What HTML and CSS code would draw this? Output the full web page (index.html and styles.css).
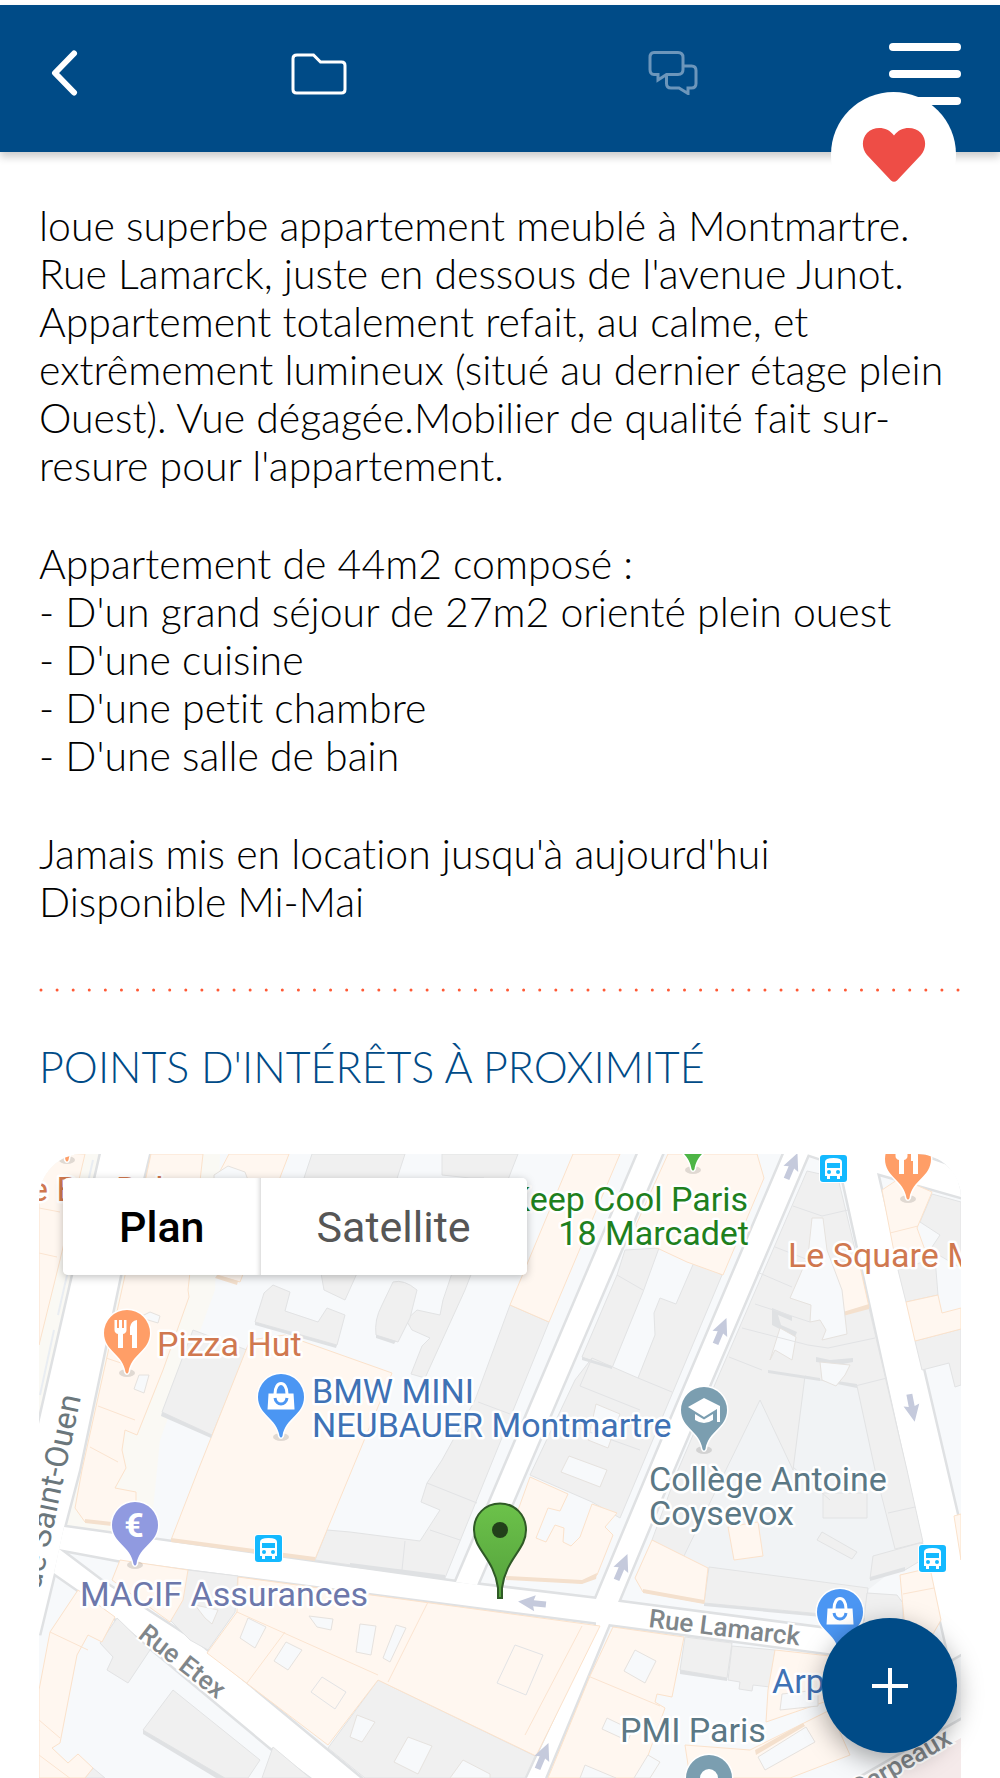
FILE: index.html
```html
<!DOCTYPE html>
<html lang="fr">
<head>
  <meta charset="UTF-8">
  <meta name="viewport" content="width=device-width, initial-scale=1.0">
  <title>Appartement meublé à Montmartre</title>
  <link rel="stylesheet" href="styles.css">
</head>
<body>
  <header class="topbar">
    <a class="back" href="#" aria-label="Retour">
      <svg width="28" height="48" viewBox="0 0 28 48"><path d="M23 4.500L4 24l19 19.500"/></svg>
    </a>
    <a class="tab" href="#" aria-label="Dossier">
      <svg width="56" height="42" viewBox="0 0 56 42"><path d="M6 2H22.500L29.500 9H50.500Q54 9 54 12.500V36.500Q54 40 50.500 40H5.500Q2 40 2 36.500V5.500Q2 2 6 2Z"/></svg>
    </a>
    <a class="tab tab-off" href="#" aria-label="Messages">
      <svg width="50" height="44" viewBox="0 0 50 44"><path d="M6 1.500H30Q35 1.500 35 6.500V18.500Q35 23.500 30 23.500H18.500L10 29V23.500H6Q2 23.500 2 18.500V6.500Q2 1.500 6 1.500ZM35 15H43.500Q48 15 48 19.500V32.500Q48 37 43.500 37H40V42.500L31 37H23Q18.500 37 18.500 32.500V23.500"/></svg>
    </a>
    <button class="burger" type="button" aria-label="Menu"><span></span><span></span><span></span></button>
    <button class="favorite" type="button" aria-label="Favori">
      <svg width="64" height="56" viewBox="0 0 64 56"><path d="M32 8.500C25 -1 12 -1 5 6C-1 13 0 22 5 28L29 53.500Q32 56 35 53.500L59 28C64 22 65 13 59 6C52 -1 39 -1 32 8.500Z"/></svg>
    </button>
  </header>

  <main class="content">
    <section class="description">
      <p>loue superbe appartement meublé à Montmartre.
Rue Lamarck, juste en dessous de l'avenue Junot.
Appartement totalement refait, au calme, et
extrêmement lumineux (situé au dernier étage plein
Ouest). Vue dégagée.Mobilier de qualité fait sur-
resure pour l'appartement.</p>
      <p>Appartement de 44m2 composé :
- D'un grand séjour de 27m2 orienté plein ouest
- D'une cuisine
- D'une petit chambre
- D'une salle de bain</p>
      <p>Jamais mis en location jusqu'à aujourd'hui
Disponible Mi-Mai</p>
    </section>

    <svg class="dots" aria-hidden="true" viewBox="0 0 922 4"><line x1="2" y1="2" x2="919" y2="2" pathLength="57"/></svg>

    <h2>POINTS D'INTÉRÊTS À PROXIMITÉ</h2>

    <div class="map">
      <svg class="map-canvas" viewBox="39 1154 922 624">
        <defs>
          <g id="roads">
            <path d="M101 1154H149L120 1275L79 1470L64 1527L54 1573L39 1635V1424Z"/>
            <path d="M64 1527L455 1582L596 1599L880 1636V1660L609 1624L370 1593L118 1560L59 1549Z"/>
            <path d="M456 1582L638 1154H662L477 1585Z"/>
            <path d="M596 1599L657 1453L784 1154H808L673 1470L618 1602L545 1778H527L596 1630Z"/>
            <path d="M807 1154L840 1165L907 1470L923 1542L950 1660L985 1640L957 1515L877 1173L961 1197V1170L905 1150Z"/>
            <path d="M59 1549L100 1580L197 1643L360 1778H312L270 1747L97 1603L54 1573Z"/>
            <path d="M860 1778L970 1715V1745L905 1785Z"/>
          </g>
          <path id="pin" d="M0 -63A23 23 0 0 0 -23 -40C-23 -22 -4 -19 -1.500 -1Q0 2 1.500 -1C4 -19 23 -22 23 -40A23 23 0 0 0 0 -63Z"/>
          <path id="arrow" d="M0 -14L8 3L3 1.500V14H-3V1.500L-8 3Z"/>
          <g id="fork">
            <path d="M-12.500 -53h2.500v8h2v-8h3v8h2v-8h2.500v10q0 3-3.500 4v14h-5v-14q-3.500-1-3.500-4Z"/>
            <path d="M10 -53V-25H5V-38H3V-46Q4 -52 10 -53Z"/>
          </g>
          <g id="bag">
            <path d="M-12.500 -43.500H12.500L13.500 -27.500H-13.500Z"/>
            <path class="bag-handle" d="M-6 -43C-6 -57 6 -57 6 -43"/>
            <path class="bag-smile" d="M-6 -39C-5 -31 5 -31 6 -39"/>
          </g>
          <g id="bus">
            <rect class="bus-bg" x="-1" y="-1" width="29" height="29" rx="4"/>
            <rect class="bus-box" width="27" height="27" rx="3"/>
            <path class="bus-body" d="M5 7Q5 3 13.500 3T22 7V21H20V24H17V21H10V24H7V21H5Z"/>
            <rect class="bus-box" x="7" y="8" width="13" height="5"/>
            <circle class="bus-box" cx="9" cy="17" r="2"/>
            <circle class="bus-box" cx="18" cy="17" r="2"/>
          </g>
          <linearGradient id="markerFill" x1="0" y1="0" x2="0" y2="1">
            <stop offset="0" stop-color="#6cc24a"/>
            <stop offset="1" stop-color="#54a13c"/>
          </linearGradient>
        </defs>

        <rect class="ground" x="39" y="1154" width="922" height="624"/>
        <path class="school" d="M760 1370L857 1386L895 1400L925 1545L868 1590L705 1570L680 1555Z"/>
        <path class="sand" d="M149 1154H220L215 1290L160 1440L150 1540L64 1527Z M39 1154H101L39 1424Z"/>

        <!-- street network -->
        <use class="road-edge" href="#roads"/>
        <use class="road" href="#roads"/>
        <path class="lane" d="M93 1160L58 1315M54 1330L40 1395"/>

        <!-- residential buildings -->
        <g class="grey">
          <path d="M127 1270H165L160 1288L167 1284L162 1298L125 1284Z"/>
          <path d="M193 1330L247 1350L212 1435L162 1412Z"/>
          <path d="M273 1285L290 1292L285 1311L318 1322L327 1308L345 1315L337 1345L255 1322L264 1293Z"/>
          <path d="M312 1154H405L390 1200L345 1300L324 1290L304 1178Z"/>
          <path d="M442 1154H518L465 1290L425 1378L411 1374L422 1346L430 1338L412 1330L406 1320L417 1310L440 1315L443 1300L484 1178H470L442 1175Z"/>
          <path d="M393 1282Q404 1279 417 1290L410 1318L398 1342L376 1335Q374 1320 382 1305Z"/>
          <path d="M510 1305L549 1322L445 1578L315 1560L327 1530L350 1532L420 1541L440 1510L421 1502L427 1483L442 1460L475 1400Z"/>
          <path d="M625 1250L659 1248L643 1292L612 1368L582 1357L617 1275Z"/>
          <path d="M695 1260L722 1275L620 1518L592 1502L530 1475L575 1380L592 1358L638 1378L655 1335L654 1313L660 1298L676 1304Z"/>
          <path d="M807 1171L838 1178L869 1308L907 1470L923 1542L895 1549L875 1470L857 1386L820 1380L805 1376L793 1470L760 1400L682 1560L652 1540L678 1470Z"/>
          <path d="M823 1493H867V1518H823Z"/>
          <path d="M822 1532L857 1552L852 1559L817 1540Z"/>
          <path d="M873 1556L920 1543L925 1558L905 1570L870 1579Z"/>
          <path d="M709 1567L868 1588L865 1618L704 1603Z"/>
          <path d="M867 1593L897 1595L903 1603V1640L862 1635Z"/>
          <path d="M932 1194L961 1202V1268L930 1250L940 1235L920 1222Z"/>
          <path d="M898 1270L935 1258L938 1295L906 1302Z"/>
          <path d="M915 1341L961 1329V1385L955 1387L949 1363L922 1370Z"/>
          <path d="M685 1637L732 1643L727 1678L680 1670Z"/>
          <path d="M732 1646L775 1650L770 1687L753 1685L752 1691L739 1689L740 1682L728 1680Z"/>
          <path d="M188 1570L238 1576L235 1612L208 1650L190 1640L170 1620Z"/>
          <path d="M378 1680L535 1756L525 1778H365L328 1748Z"/>
          <path d="M117 1618L150 1650L128 1683L107 1670L113 1657L100 1643Z"/>
          <path d="M173 1690L260 1760L248 1778H225L143 1730Z"/>
          <path d="M273 1747L310 1778H262Z"/>
          <path d="M85 1778L93 1768L105 1778Z"/>
        </g>

        <!-- commercial buildings -->
        <g class="cream">
          <path d="M39 1154H85L60 1260L39 1345Z"/>
          <path d="M151 1154H203L188 1290L189 1297L163 1370L137 1435L125 1430L122 1450L126 1468L115 1488L136 1492V1524L85 1522L75 1508L82 1470L124 1280Z"/>
          <path d="M229 1154H289L240 1282L217 1275L210 1190Z"/>
          <path d="M250 1340L285 1335L392 1373L315 1559L171 1540L199 1468Z"/>
          <path d="M573 1154H620L549 1322L510 1305Z"/>
          <path d="M668 1154H757L764 1178L723 1275L687 1262L672 1255L640 1240L636 1225Z"/>
          <path d="M530 1477L568 1494L560 1511L548 1508L536 1538L546 1542L555 1525L564 1528L563 1542L571 1546L580 1537L592 1504L617 1513L605 1527L613 1535L597 1575L582 1583L506 1578L500 1560Z"/>
          <path d="M814 1262H859L869 1307L843 1315L836 1290L812 1290Z"/>
          <path d="M652 1540L708 1568L704 1603L643 1592L635 1578Z"/>
          <path d="M728 1527L758 1522L763 1556L734 1560Z"/>
          <path d="M900 1575L930 1568L941 1620L933 1634L905 1630Z"/>
          <path d="M954 1516L961 1514V1560Z"/>
          <path d="M882 1190L900 1178L932 1192L917 1228L925 1250L896 1262Z"/>
          <path d="M906 1302L938 1295L942 1313L961 1308V1329L915 1341Z"/>
          <path d="M613 1627L684 1637L672 1697L657 1694L655 1702L665 1708L640 1778H548L590 1676Z"/>
          <path d="M775 1650L830 1656V1700L766 1722L768 1690Z"/>
          <path d="M750 1750L830 1710L850 1755L790 1778H690L685 1745Z"/>
          <path d="M120 1560L188 1570L183 1600L170 1622L112 1580Z"/>
          <path d="M238 1577L600 1626L536 1756L378 1680L328 1745L207 1653L237 1612Z"/>
          <path d="M78 1590L115 1617L102 1642L88 1635L77 1655L60 1743L52 1748L68 1763L78 1754L93 1768L85 1778H39V1690L50 1632Z"/>
        </g>
        <path class="pink" d="M890 1778L961 1738V1778Z"/>

        <!-- walls in shadow -->
        <g class="wall-grey">
          <path d="M162 1412L212 1435L211 1438L161 1416Z"/>
          <path d="M255 1322L337 1345L336 1348L255 1325Z"/>
          <path d="M376 1335L396 1341L394 1344L376 1338Z"/>
          <path d="M350 1563L445 1575V1579L350 1567Z"/>
          <path d="M582 1357L612 1366V1369L582 1360Z"/>
          <path d="M704 1603L865 1618V1621L704 1606Z"/>
          <path d="M680 1670L727 1678V1681L680 1674Z"/>
          <path d="M870 1577L905 1567V1571L870 1581Z"/>
          <path d="M143 1730L225 1778H216L143 1734Z"/>
          <path d="M768 1370L820 1378V1381L768 1373Z"/>
          <path d="M816 1357L830 1360L853 1358V1362L838 1365L816 1362Z"/>
          <path d="M837 1381L857 1384V1388L837 1384Z"/>
          <path d="M781 1325L797 1332L795 1337L772 1325V1308L792 1316V1321L778 1315Z"/>
        </g>
        <g class="wall-cream">
          <path d="M506 1576L582 1580L597 1573L596 1579L582 1584L506 1580Z"/>
          <path d="M643 1589L704 1600V1604L643 1593Z"/>
          <path d="M171 1538L315 1557V1561L171 1542Z"/>
          <path d="M85 1519L112 1522V1526L85 1523Z"/>
          <path d="M843 1312L869 1304V1309L843 1316Z"/>
          <path d="M217 1275L238 1281L237 1285L215 1278Z"/>
          <path d="M755 1750L803 1723L805 1726L756 1755Z"/>
        </g>

        <!-- inner courtyards -->
        <g class="court">
          <path d="M812 1218H823L827 1250L842 1290L847 1334L822 1340L826 1330L820 1320L810 1322L811 1305L790 1298L800 1275L808 1256Z"/>
          <path d="M780 1328L796 1337L792 1360L775 1350L770 1360Z"/>
          <path d="M820 1362L850 1365L845 1375L836 1386L822 1380Z"/>
          <path d="M596 1404L620 1414L608 1448L588 1440Z"/>
          <path d="M569 1456L607 1470L600 1487L561 1472Z"/>
          <path d="M635 1650L656 1661L645 1683L624 1671Z"/>
          <path d="M607 1718L632 1730L628 1741L602 1729Z"/>
          <path d="M585 1765L616 1778H580Z"/>
          <path d="M648 1755L660 1762L650 1778H634Z"/>
          <path d="M248 1618L266 1627L255 1648L240 1638Z"/>
          <path d="M286 1642L302 1650L288 1670L274 1661Z"/>
          <path d="M309 1616L333 1619L331 1630L317 1627Z"/>
          <path d="M360 1624L376 1626L371 1655L356 1652Z"/>
          <path d="M396 1625L406 1628L390 1662L383 1658Z"/>
          <path d="M357 1715L375 1722L362 1742L350 1737Z"/>
          <path d="M408 1737L432 1746L418 1774L394 1762Z"/>
          <path d="M463 1760L490 1774V1778H450Z"/>
          <path d="M782 1694L818 1690V1706L780 1710Z"/>
          <path d="M758 1757L806 1727L815 1742L765 1770Z"/>
          <path d="M195 1605L218 1610L212 1624L205 1618Z"/>
          <path d="M214 1175L228 1166L245 1172L248 1180H214Z"/>
          <path d="M138 1318L150 1312L160 1316L158 1323L148 1320Z"/>
          <path d="M139 1375L149 1375L144 1393L134 1389Z"/>
        </g>

        <!-- parcel lines -->
        <path class="parcel-cream" d="M39 1208L60 1212M39 1253L57 1257M98 1406L135 1420M90 1447L118 1462M106 1358L130 1366M428 1602L388 1682M237 1612L378 1675M285 1632L247 1683M588 1676L660 1706M582 1626L525 1735M50 1632L88 1650M39 1720L60 1738M890 1233L918 1226M903 1594L934 1588M39 1755L75 1782"/>
        <path class="parcel-grey" d="M478 1402L510 1414M427 1483L477 1503M430 1530L460 1540M405 1541L402 1570M793 1206L822 1216L848 1210M775 1247L806 1259M757 1272L792 1287M755 1304L810 1322M742 1328L808 1345L828 1348L875 1338M729 1357L762 1370M617 1275L643 1290M592 1358L580 1386L640 1410M570 1425L640 1450M638 1378L672 1392M855 1386L887 1378M888 1513L915 1507M793 1467L830 1500M515 1645L543 1655L526 1695L497 1683ZM322 1677L346 1692L335 1709L311 1692Z"/>

        <!-- one-way arrows -->
        <g class="arrows">
          <use href="#arrow" transform="translate(792 1166) rotate(23)"/>
          <use href="#arrow" transform="translate(721 1331) rotate(23)"/>
          <use href="#arrow" transform="translate(912 1408) rotate(169)"/>
          <use href="#arrow" transform="translate(622 1567) rotate(23)"/>
          <use href="#arrow" transform="translate(543 1756) rotate(23)"/>
          <use href="#arrow" transform="translate(532 1603) rotate(-84)"/>
        </g>

        <!-- street names -->
        <text class="street" text-anchor="end" transform="translate(81 1397) rotate(-78)">de Saint-Ouen</text>
        <text class="street street-small" transform="translate(137 1637) rotate(38)">Rue Etex</text>
        <text class="street street-small" transform="translate(648 1627) rotate(7)">Rue Lamarck</text>
        <text class="street street-small" text-anchor="end" transform="translate(953 1743) rotate(-30)">Carpeaux</text>

        <!-- transit stops -->
        <use href="#bus" transform="translate(820 1155)"/>
        <use href="#bus" transform="translate(255 1535)"/>
        <use href="#bus" transform="translate(919 1545)"/>

        <!-- points of interest -->
        <g class="poi-shadow">
          <ellipse cx="127" cy="1373" rx="8" ry="4"/>
          <ellipse cx="281" cy="1437" rx="8" ry="4"/>
          <ellipse cx="135" cy="1565" rx="8" ry="4"/>
          <ellipse cx="704" cy="1450" rx="8" ry="4"/>
          <ellipse cx="908" cy="1199" rx="8" ry="4"/>
          <ellipse cx="693" cy="1170" rx="8" ry="4"/>
          <ellipse cx="67" cy="1160" rx="8" ry="4"/>
        </g>
        <g class="poi food" transform="translate(67 1161)"><use href="#pin"/></g>
        <g class="poi food" transform="translate(127 1373)"><use href="#pin"/><use class="glyph" href="#fork"/></g>
        <g class="poi food" transform="translate(908 1199)"><use href="#pin"/><use class="glyph" href="#fork"/></g>
        <g class="poi shop" transform="translate(281 1437)"><use href="#pin"/><use class="glyph" href="#bag"/></g>
        <g class="poi shop" transform="translate(840 1652)"><use href="#pin"/><use class="glyph" href="#bag"/></g>
        <g class="poi sport" transform="translate(693 1170)"><use href="#pin"/></g>
        <g class="poi bank" transform="translate(135 1565)"><use href="#pin"/><text class="euro" x="-1" y="-28" text-anchor="middle">€</text></g>
        <g class="poi place" transform="translate(704 1450)">
          <use href="#pin"/>
          <path class="glyph" d="M0 -52L16 -44V-28H13V-41L0 -33L-16 -43ZM-9 -36L0 -30.500L9 -36V-30Q0 -24 -9 -30Z"/>
        </g>
        <g class="poi place" transform="translate(709 1818)"><use href="#pin"/><circle class="glyph" cy="-40" r="9"/></g>

        <g class="label">
          <text class="label-food" x="30" y="1201">e Bar Bel</text>
          <text class="label-food" x="157" y="1356">Pizza Hut</text>
          <text class="label-food" x="788" y="1267">Le Square M</text>
          <text class="label-shop" x="312" y="1403">BMW MINI</text>
          <text class="label-shop" x="312" y="1437">NEUBAUER Montmartre</text>
          <text class="label-shop" x="772" y="1693">Arpèges</text>
          <text class="label-sport" x="748" y="1211" text-anchor="end">Keep Cool Paris</text>
          <text class="label-sport" x="749" y="1245" text-anchor="end">18 Marcadet</text>
          <text class="label-bank" x="80" y="1606">MACIF Assurances</text>
          <text class="label-place" x="649" y="1491">Collège Antoine</text>
          <text class="label-place" x="649" y="1525">Coysevox</text>
          <text class="label-place" x="620" y="1742">PMI Paris</text>
        </g>

        <!-- the apartment -->
        <path class="marker" fill="url(#markerFill)" d="M500 1503.500C485 1503.500 474 1515 474 1530C474 1550 494 1558 498 1588V1598H502V1588C506 1558 526 1550 526 1530C526 1515 515 1503.500 500 1503.500Z"/>
        <circle class="marker-dot" cx="500" cy="1530" r="8"/>
      </svg>

      <div class="map-type">
        <button class="active" type="button">Plan</button>
        <button type="button">Satellite</button>
      </div>
    </div>
  </main>

  <button class="fab" type="button" aria-label="Ajouter">
    <svg width="38" height="38" viewBox="0 0 38 38"><path d="M19 1V37M1 19H37"/></svg>
  </button>
</body>
</html>
```

FILE: styles.css
```css
* {
  box-sizing: border-box;
}
body {
  margin: 0;
  padding-top: 5px;
  background-color: #fff;
  color: #000;
  font-family: Lato, sans-serif;
  font-variant-ligatures: none;
}
button {
  border: none;
  padding: 0;
  background: none;
  cursor: pointer;
}
svg {
  display: block;
}

/* top bar */
.topbar {
  position: relative;
  display: grid;
  grid-template-columns: 11fr 38fr 38fr 12fr;
  height: 147px;
  padding: 38px 39px 0 40px;
  background-color: #004b87;
  box-shadow: 0 5px 8px rgba(0, 0, 0, 0.2);
}
.topbar svg {
  fill: none;
  stroke: #fff;
  stroke-width: 3;
}
.back {
  padding: 6px 0 0 11px;
}
.topbar .back svg {
  stroke-width: 6;
  stroke-linecap: round;
  stroke-linejoin: round;
}
.tab {
  justify-self: center;
  padding-top: 10px;
}
.tab-off {
  padding-top: 8px;
}
.topbar .tab-off svg {
  stroke: #6c96bb;
  stroke-width: 3;
}
.burger {
  display: flex;
  flex-direction: column;
  gap: 19px;
  justify-self: end;
  align-self: start;
  width: 72px;
}
.burger span {
  height: 8px;
  border-radius: 4px;
  background-color: #fff;
}
.favorite {
  position: absolute;
  right: 44px;
  top: 87px;
  display: flex;
  justify-content: center;
  align-items: center;
  width: 125px;
  height: 125px;
  border-radius: 50%;
  background-color: #fff;
}
.topbar .favorite svg {
  fill: #ee4d46;
  stroke: none;
}

/* advert text */
.content {
  padding: 50px 39px 0;
}
.description {
  display: flex;
  flex-direction: column;
  gap: 50px;
}
.description p {
  margin: 0;
  font-size: 41px;
  font-weight: 300;
  line-height: 48px;
  white-space: pre-line;
}
.dots {
  width: 100%;
  margin: 62px 0 49px;
  overflow: visible;
}
.dots line {
  stroke: #ff5a36;
  stroke-width: 3;
  stroke-linecap: round;
  stroke-dasharray: 0 1;
}
h2 {
  margin: 0 0 61px;
  color: #004b87;
  font-size: 43px;
  font-weight: 300;
  line-height: 52px;
}

/* map */
.map {
  position: relative;
  overflow: hidden;
  border-radius: 44px 44px 0 0;
}
.map-canvas {
  width: 100%;
  font-family: Roboto, sans-serif;
}
.ground {
  fill: #f7f9fb;
}
.school {
  fill: #f1f3f5;
}
.sand {
  fill: #faf9f4;
}
.road {
  fill: #fff;
}
.road-edge {
  fill: #fff;
  stroke: #dfe1e3;
  stroke-width: 5;
}
.lane {
  fill: none;
  stroke: #e9edf2;
  stroke-width: 2;
}
.grey {
  fill: #f0f0f0;
  stroke: #e2e3e4;
}
.cream {
  fill: #fff7f0;
  stroke: #fbe2cb;
}
.pink {
  fill: #f5eaea;
}
.wall-grey {
  fill: #dfe1e3;
}
.wall-cream {
  fill: #f4e0cd;
}
.court {
  fill: #f7f9fb;
  stroke: #e6e2de;
}
.parcel-cream {
  fill: none;
  stroke: #fbe4d0;
}
.parcel-grey {
  fill: none;
  stroke: #e2e3e5;
}
.arrows {
  fill: #c5cadc;
}
.street {
  fill: #6b777c;
  stroke: #fff;
  stroke-width: 4;
  paint-order: stroke;
  font-size: 32px;
}
.street-small {
  fill: #80868a;
  font-size: 26px;
  font-weight: 500;
}
.bus-bg,
.bus-body {
  fill: #fff;
}
.bus-box {
  fill: #14b9ff;
}
.poi-shadow {
  fill: rgba(0, 0, 0, 0.12);
}
.poi {
  stroke: #fff;
  stroke-width: 3;
  paint-order: stroke;
}
.food {
  fill: #ff9e67;
}
.shop {
  fill: #4b96f3;
}
.sport {
  fill: #4db546;
}
.bank {
  fill: #909ae0;
}
.place {
  fill: #7b9eb0;
}
.glyph {
  fill: #fff;
  stroke: none;
}
.bag-handle {
  fill: none;
  stroke: #fff;
  stroke-width: 3;
}
.bag-smile {
  fill: none;
  stroke: #4b96f3;
  stroke-width: 3;
}
.euro {
  fill: #fff;
  stroke: none;
  font-size: 34px;
  font-weight: 700;
}
.label {
  stroke: #fff;
  stroke-width: 5;
  stroke-linejoin: round;
  paint-order: stroke;
  font-size: 34px;
}
.label-food {
  fill: #d0784f;
}
.label-shop {
  fill: #3f72b5;
}
.label-sport {
  fill: #1e801e;
}
.label-bank {
  fill: #6d78ab;
}
.label-place {
  fill: #5b7885;
}
.marker {
  stroke: #2f5a26;
  stroke-width: 2;
}
.marker-dot {
  fill: #22401a;
}
.map-type {
  position: absolute;
  top: 24px;
  left: 24px;
  display: flex;
  border-radius: 5px;
  box-shadow: 0 2px 8px rgba(0, 0, 0, 0.25);
}
.map-type button {
  height: 97px;
  padding: 0 56px;
  border-radius: 0 5px 5px 0;
  background-color: #fff;
  color: #565656;
  font-family: Roboto, sans-serif;
  font-size: 43px;
}
.map-type .active {
  border-radius: 5px 0 0 5px;
  box-shadow: inset -5px 0 5px -4px rgba(0, 0, 0, 0.2);
  color: #000;
  font-weight: 500;
}

/* floating action button */
.fab {
  position: fixed;
  right: 43px;
  bottom: 25px;
  display: flex;
  justify-content: center;
  align-items: center;
  width: 135px;
  height: 135px;
  border-radius: 50%;
  background-color: #004b87;
  box-shadow: 0 8px 26px rgba(0, 0, 0, 0.35);
}
.fab path {
  stroke: #fff;
  stroke-width: 4;
}
```
